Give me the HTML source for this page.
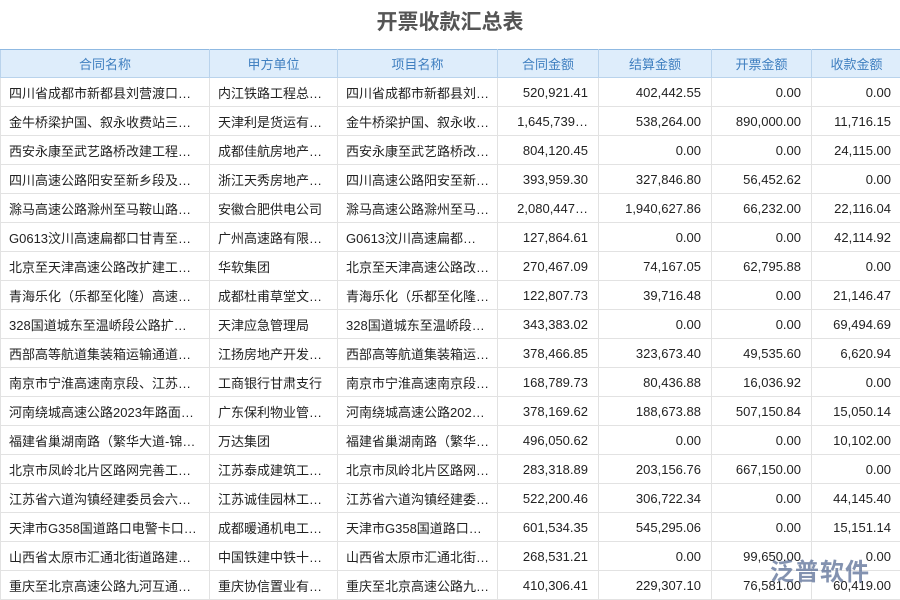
<!DOCTYPE html><html><head><meta charset="utf-8"><style>
body{margin:0;width:900px;height:600px;overflow:hidden;background:#fff;font-family:"Liberation Sans","Noto Sans CJK SC",sans-serif;}
h1{margin:0;height:49px;line-height:45px;text-align:center;font-size:21px;color:#555;font-weight:bold;}
table{border-collapse:collapse;table-layout:fixed;width:901px;font-size:13px;color:#222;}
th{background:#deedfb;color:#3f7fc0;font-weight:normal;height:27px;padding:0;border:1px solid #b9d3ec;border-top:1px solid #8fb9e2;}
td{height:28px;padding:0 8px;border:1px solid #e2e2e2;white-space:nowrap;overflow:hidden;text-overflow:ellipsis;}
td.n{text-align:right;padding-right:10px}
.wm{position:absolute;left:770px;top:552px;font-size:24px;color:rgba(90,110,150,.75);font-weight:bold;letter-spacing:1px}
</style></head><body>
<h1>开票收款汇总表</h1>
<table><colgroup><col style="width:209px"><col style="width:128px"><col style="width:160px"><col style="width:101px"><col style="width:113px"><col style="width:100px"><col style="width:90px"></colgroup>
<tr><th>合同名称</th><th>甲方单位</th><th>项目名称</th><th>合同金额</th><th>结算金额</th><th>开票金额</th><th>收款金额</th></tr>
<tr><td>四川省成都市新都县刘营渡口…</td><td>内江铁路工程总…</td><td>四川省成都市新都县刘…</td><td class="n">520,921.41</td><td class="n">402,442.55</td><td class="n">0.00</td><td class="n">0.00</td></tr>
<tr><td>金牛桥梁护国、叙永收费站三…</td><td>天津利是货运有…</td><td>金牛桥梁护国、叙永收…</td><td class="n">1,645,739…</td><td class="n">538,264.00</td><td class="n">890,000.00</td><td class="n">11,716.15</td></tr>
<tr><td>西安永康至武艺路桥改建工程…</td><td>成都佳航房地产…</td><td>西安永康至武艺路桥改…</td><td class="n">804,120.45</td><td class="n">0.00</td><td class="n">0.00</td><td class="n">24,115.00</td></tr>
<tr><td>四川高速公路阳安至新乡段及…</td><td>浙江天秀房地产…</td><td>四川高速公路阳安至新…</td><td class="n">393,959.30</td><td class="n">327,846.80</td><td class="n">56,452.62</td><td class="n">0.00</td></tr>
<tr><td>滁马高速公路滁州至马鞍山路…</td><td>安徽合肥供电公司</td><td>滁马高速公路滁州至马…</td><td class="n">2,080,447…</td><td class="n">1,940,627.86</td><td class="n">66,232.00</td><td class="n">22,116.04</td></tr>
<tr><td>G0613汶川高速扁都口甘青至…</td><td>广州高速路有限…</td><td>G0613汶川高速扁都口…</td><td class="n">127,864.61</td><td class="n">0.00</td><td class="n">0.00</td><td class="n">42,114.92</td></tr>
<tr><td>北京至天津高速公路改扩建工…</td><td>华软集团</td><td>北京至天津高速公路改…</td><td class="n">270,467.09</td><td class="n">74,167.05</td><td class="n">62,795.88</td><td class="n">0.00</td></tr>
<tr><td>青海乐化（乐都至化隆）高速…</td><td>成都杜甫草堂文…</td><td>青海乐化（乐都至化隆…</td><td class="n">122,807.73</td><td class="n">39,716.48</td><td class="n">0.00</td><td class="n">21,146.47</td></tr>
<tr><td>328国道城东至温峤段公路扩…</td><td>天津应急管理局</td><td>328国道城东至温峤段…</td><td class="n">343,383.02</td><td class="n">0.00</td><td class="n">0.00</td><td class="n">69,494.69</td></tr>
<tr><td>西部高等航道集装箱运输通道…</td><td>江扬房地产开发…</td><td>西部高等航道集装箱运…</td><td class="n">378,466.85</td><td class="n">323,673.40</td><td class="n">49,535.60</td><td class="n">6,620.94</td></tr>
<tr><td>南京市宁淮高速南京段、江苏…</td><td>工商银行甘肃支行</td><td>南京市宁淮高速南京段…</td><td class="n">168,789.73</td><td class="n">80,436.88</td><td class="n">16,036.92</td><td class="n">0.00</td></tr>
<tr><td>河南绕城高速公路2023年路面…</td><td>广东保利物业管…</td><td>河南绕城高速公路2023…</td><td class="n">378,169.62</td><td class="n">188,673.88</td><td class="n">507,150.84</td><td class="n">15,050.14</td></tr>
<tr><td>福建省巢湖南路（繁华大道-锦…</td><td>万达集团</td><td>福建省巢湖南路（繁华…</td><td class="n">496,050.62</td><td class="n">0.00</td><td class="n">0.00</td><td class="n">10,102.00</td></tr>
<tr><td>北京市凤岭北片区路网完善工…</td><td>江苏泰成建筑工…</td><td>北京市凤岭北片区路网…</td><td class="n">283,318.89</td><td class="n">203,156.76</td><td class="n">667,150.00</td><td class="n">0.00</td></tr>
<tr><td>江苏省六道沟镇经建委员会六…</td><td>江苏诚佳园林工…</td><td>江苏省六道沟镇经建委…</td><td class="n">522,200.46</td><td class="n">306,722.34</td><td class="n">0.00</td><td class="n">44,145.40</td></tr>
<tr><td>天津市G358国道路口电警卡口…</td><td>成都暖通机电工…</td><td>天津市G358国道路口…</td><td class="n">601,534.35</td><td class="n">545,295.06</td><td class="n">0.00</td><td class="n">15,151.14</td></tr>
<tr><td>山西省太原市汇通北街道路建…</td><td>中国铁建中铁十…</td><td>山西省太原市汇通北街…</td><td class="n">268,531.21</td><td class="n">0.00</td><td class="n">99,650.00</td><td class="n">0.00</td></tr>
<tr><td>重庆至北京高速公路九河互通…</td><td>重庆协信置业有…</td><td>重庆至北京高速公路九…</td><td class="n">410,306.41</td><td class="n">229,307.10</td><td class="n">76,581.00</td><td class="n">60,419.00</td></tr>
</table>
<div class="wm">泛普软件</div>
</body></html>
